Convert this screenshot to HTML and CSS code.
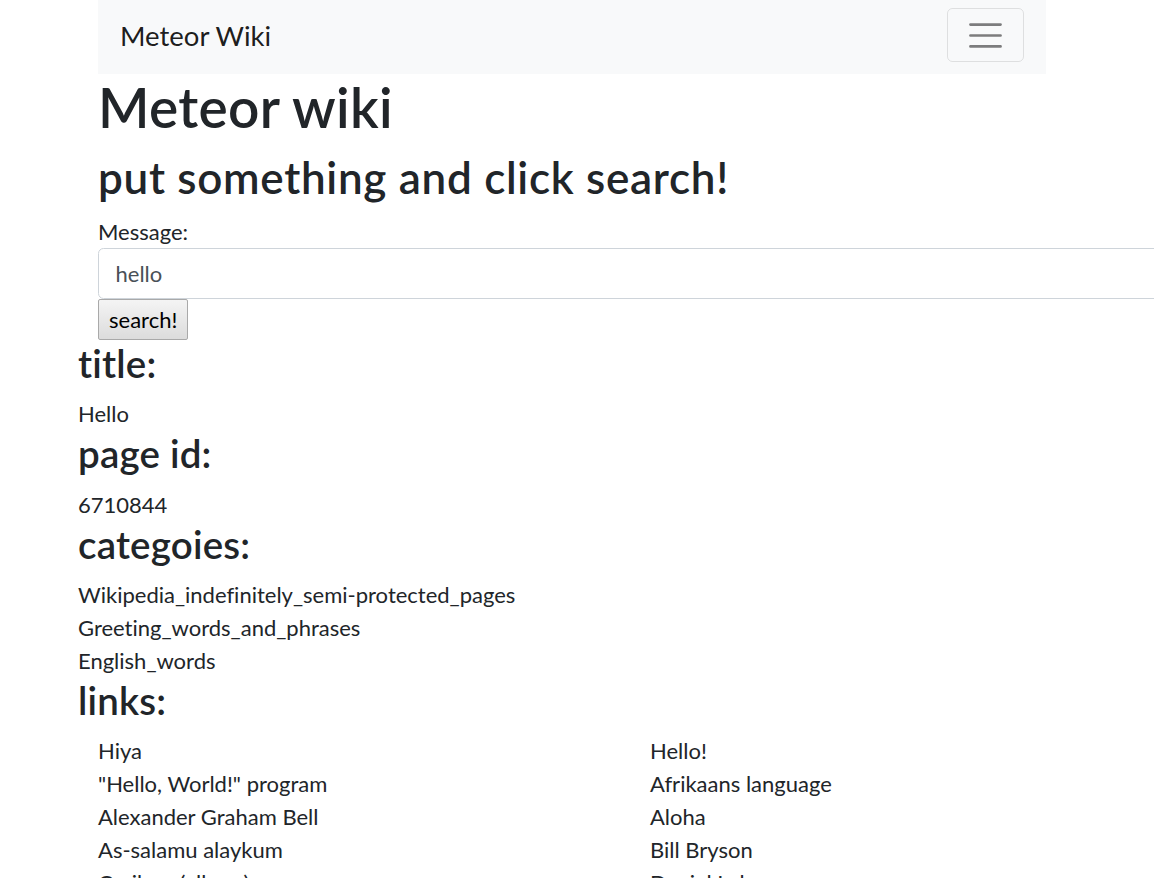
FILE: index.html
```html
<!DOCTYPE html>
<html lang="en">
<head>
<meta charset="utf-8">
<title>Meteor Wiki</title>
<link rel="stylesheet" href="styles.css">
</head>
<body>
<div class="top">
  <nav class="navbar">
    <span class="brand">Meteor Wiki</span>
    <button class="toggler" type="button" aria-label="Toggle navigation">
      <svg class="toggler-icon" viewBox="0 0 30 30" width="41" height="41"><path d="M4 7h22M4 15h22M4 23h22" stroke="rgba(0,0,0,0.5)" stroke-width="2" stroke-linecap="round" fill="none"/></svg>
    </button>
  </nav>
  <h1>Meteor wiki</h1>
  <h2>put something and click search!</h2>
  <form class="search">
    <label for="msg">Message:</label>
    <input id="msg" class="form-control" type="text" value="hello">
    <button class="btn-search" type="button">search!</button>
  </form>
</div>
<section class="result">
  <h3>title:</h3>
  <p>Hello</p>
  <h3>page id:</h3>
  <p>6710844</p>
  <h3>categoies:</h3>
  <p>Wikipedia_indefinitely_semi-protected_pages</p>
  <p>Greeting_words_and_phrases</p>
  <p>English_words</p>
  <h3>links:</h3>
  <ul class="links">
    <li>Hiya</li>
    <li>Hello!</li>
    <li>"Hello, World!" program</li>
    <li>Afrikaans language</li>
    <li>Alexander Graham Bell</li>
    <li>Aloha</li>
    <li>As-salamu alaykum</li>
    <li>Bill Bryson</li>
    <li>Caribou (album)</li>
    <li>Daniel Lehrer</li>
  </ul>
</section>
</body>
</html>
```
FILE: styles.css
```css
html, body {
  margin: 0;
  overflow: hidden;
}
body {
  font-family: Lato, "Noto Sans", sans-serif;
  font-size: 22px;
  line-height: 33px;
  color: #212529;
  background: #fff;
  font-variant-ligatures: no-common-ligatures;
}
h1, h2, h3 {
  margin: 0 0 11px;
  font-weight: 600;
  line-height: 1.2;
}
h1 { font-size: 55px; letter-spacing: 0.3px; }
h2 { font-size: 44px; letter-spacing: 0.7px; }
h3 { font-size: 38.5px; letter-spacing: 0.2px; }
p { margin: 0; }

.top {
  margin-left: 98px;
}
.navbar {
  width: 948px;
  box-sizing: border-box;
  background: #f8f9fa;
  padding: 8px 22px 12px;
  display: flex;
  align-items: center;
  justify-content: space-between;
}
.brand {
  font-size: 27.5px;
  line-height: 41px;
  color: rgba(0,0,0,0.9);
}
.toggler {
  width: 77px;
  height: 54px;
  box-sizing: border-box;
  background: transparent;
  border: 1px solid rgba(0,0,0,0.1);
  border-radius: 5.5px;
  padding: 0;
  display: flex;
  align-items: center;
  justify-content: center;
}
.toggler-icon { display: block; }

.search label {
  display: block;
}
.form-control {
  display: block;
  width: 1100px;
  box-sizing: border-box;
  height: 51.5px;
  padding: 8.25px 16.5px;
  font: inherit;
  line-height: 33px;
  color: #495057;
  background: #fff;
  border: 1px solid #ced4da;
  border-radius: 5.5px;
  margin: 0;
}
.btn-search {
  display: block;
  margin: 0;
  font: inherit;
  line-height: 33px;
  height: 41px;
  padding: 0 10px;
  color: #000;
  background: linear-gradient(#f4f4f4, #dcdcdc);
  border: 1px solid #a9a9a9;
  border-radius: 2px;
}

.result {
  margin-left: 78px;
}
.links {
  list-style: none;
  margin: 0;
  padding: 0 0 0 20px;
  display: grid;
  grid-template-columns: 552px 552px;
}
```
